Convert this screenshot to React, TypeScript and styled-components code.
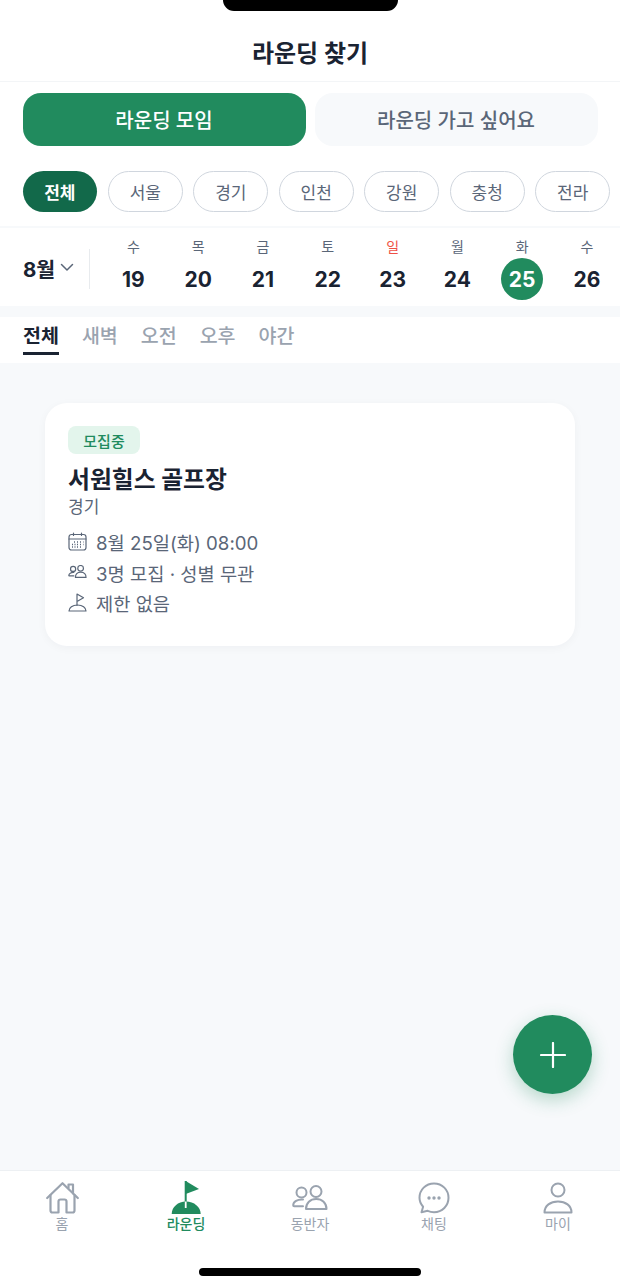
import React from 'react';
import styled, { createGlobalStyle } from 'styled-components';

const GlobalStyle = createGlobalStyle`
  * { box-sizing: border-box; }
  html, body { margin: 0; padding: 0; background: #fff; }
  body { font-family: "Inter", "Noto Sans CJK KR", sans-serif; color: #1a2332; }
`;

const Screen = styled.div`
  position: relative;
  width: 620px;
  height: 1276px;
  display: flex;
  flex-direction: column;
  overflow: hidden;
  background: #f7f9fb;
`;

const Notch = styled.div`
  position: absolute;
  top: 0;
  left: 223px;
  width: 175px;
  height: 11px;
  background: #000;
  border-radius: 0 0 18px 18px;
`;

const Header = styled.header`
  height: 82px;
  padding-top: 37px;
  background: #fff;
  border-bottom: 1px solid #f3f5f7;
  text-align: center;
  font-size: 24px;
  line-height: 34px;
  font-weight: 700;
  color: #1a2332;
`;

const ModeRow = styled.div`
  display: flex;
  gap: 9px;
  padding: 11px 22.5px 0;
  background: #fff;
`;

const ModeButton = styled.div<{ $active?: boolean }>`
  flex: 1;
  height: 53px;
  display: flex;
  align-items: center;
  justify-content: center;
  border-radius: 18px;
  font-size: 20px;
  font-weight: 500;
  background: ${p => (p.$active ? '#218b5e' : '#f7f9fb')};
  color: ${p => (p.$active ? '#fff' : '#5a6678')};
`;

const RegionRow = styled.div`
  display: flex;
  gap: 10.9px;
  padding: 25px 0 14px 22.5px;
  background: #fff;
`;

const RegionChip = styled.div<{ $active?: boolean }>`
  flex: none;
  width: 74.6px;
  height: 41px;
  display: flex;
  align-items: center;
  justify-content: center;
  border-radius: 21px;
  font-size: 17px;
  font-weight: ${p => (p.$active ? 700 : 400)};
  background: ${p => (p.$active ? '#12694a' : '#fff')};
  color: ${p => (p.$active ? '#fff' : '#5a6678')};
  border: ${p => (p.$active ? 'none' : '1.5px solid #d0d6de')};
`;

const CalendarRow = styled.div`
  display: flex;
  align-items: center;
  height: 79px;
  margin-top: 1px;
  padding-top: 3px;
  background: #fff;
  border-top: 1px solid #f7f9fb;
`;

const MonthPicker = styled.div`
  width: 90px;
  height: 40px;
  padding: 0 0 2px 23px;
  display: flex;
  align-items: center;
  gap: 5px;
  border-right: 1px solid #e8ebee;
  font-size: 20.5px;
  font-weight: 700;
`;

const DayList = styled.div`
  flex: 1;
  display: grid;
  grid-template-columns: repeat(8, 64.8px);
  padding-left: 11px;
`;

const DayCell = styled.div`
  display: flex;
  flex-direction: column;
  align-items: center;
`;

const Weekday = styled.span<{ $sunday?: boolean }>`
  font-size: 14px;
  line-height: 20px;
  color: ${p => (p.$sunday ? '#ef5145' : '#5a6678')};
`;

const DateNumber = styled.span<{ $selected?: boolean }>`
  width: 42px;
  height: 42px;
  margin-top: 1.5px;
  display: flex;
  align-items: center;
  justify-content: center;
  border-radius: 50%;
  font-size: 21px;
  font-weight: 700;
  background: ${p => (p.$selected ? '#218b5e' : 'transparent')};
  color: ${p => (p.$selected ? '#fff' : '#1a2332')};
`;

const TabBar = styled.div`
  display: flex;
  gap: 23px;
  height: 46px;
  margin-top: 11px;
  padding: 0 23px;
  background: #fff;
`;

const TimeTab = styled.div<{ $active?: boolean }>`
  height: 38px;
  font-size: 19.5px;
  line-height: 38px;
  font-weight: ${p => (p.$active ? 700 : 500)};
  color: ${p => (p.$active ? '#1a2332' : '#9aa3af')};
  border-bottom: ${p => (p.$active ? '3px solid #1a2332' : 'none')};
`;

const Content = styled.main`
  flex: 1;
  padding: 40px 45px 0;
`;

const RoundCard = styled.article`
  height: 243px;
  padding: 23px;
  background: #fff;
  border-radius: 22px;
  box-shadow: 0 2px 10px rgba(26, 35, 50, 0.04);
`;

const StatusBadge = styled.span`
  display: inline-flex;
  align-items: center;
  justify-content: center;
  width: 72px;
  height: 28px;
  border-radius: 8px;
  font-size: 15px;
  font-weight: 500;
  background: #e3f5ec;
  color: #218b5e;
`;

const CourseName = styled.h2`
  margin: 10px 0 0;
  font-size: 23.8px;
  line-height: 31px;
  font-weight: 700;
  color: #1a2332;
`;

const CourseRegion = styled.div`
  font-size: 17px;
  line-height: 24px;
  color: #5a6678;
`;

const InfoList = styled.div`
  display: flex;
  flex-direction: column;
  gap: 5.5px;
  margin-top: 10px;
`;

const InfoRow = styled.div`
  display: flex;
  align-items: center;
  gap: 9px;
  height: 25px;
  font-size: 18.7px;
  color: #5a6678;
`;

const Fab = styled.button`
  position: absolute;
  left: 513px;
  top: 1015px;
  width: 79px;
  height: 79px;
  padding: 0;
  display: flex;
  align-items: center;
  justify-content: center;
  border: none;
  border-radius: 50%;
  background: #218b5e;
  box-shadow: 0 6px 18px rgba(33, 139, 94, 0.3);
`;

const BottomNav = styled.nav`
  height: 106px;
  display: grid;
  grid-template-columns: repeat(5, 1fr);
  padding: 10px 0 0;
  background: #fff;
  border-top: 1px solid #edf0f3;
`;

const NavItem = styled.div<{ $active?: boolean }>`
  display: flex;
  flex-direction: column;
  align-items: center;
  font-size: 14px;
  line-height: 20px;
  font-weight: ${p => (p.$active ? 500 : 400)};
  color: ${p => (p.$active ? '#218b5e' : '#9aa3af')};
`;

const NavIcon = styled.span`
  height: 33px;
  display: flex;
  align-items: flex-end;
`;

const HomeIndicator = styled.div`
  position: absolute;
  left: 199px;
  top: 1268px;
  width: 222px;
  height: 8px;
  border-radius: 4px;
  background: #000;
`;

const days = [
  { label: '수', date: 19 },
  { label: '목', date: 20 },
  { label: '금', date: 21 },
  { label: '토', date: 22 },
  { label: '일', date: 23, sunday: true },
  { label: '월', date: 24 },
  { label: '화', date: 25, selected: true },
  { label: '수', date: 26 },
];

const regions = ['전체', '서울', '경기', '인천', '강원', '충청', '전라'];
const timeTabs = ['전체', '새벽', '오전', '오후', '야간'];

const line = { fill: 'none', stroke: 'currentColor', strokeLinecap: 'round', strokeLinejoin: 'round' } as const;

const CalendarIcon = () => (
  <svg width="19" height="19" viewBox="0 0 19 19" {...line} strokeWidth="1.2">
    <rect x="1" y="2.500" width="17" height="15.500" rx="2.500" />
    <path d="M1 7h17M5.500 1v2.500M13.500 1v2.500" />
    <path d="M6 10h1M9 10h1M12 10h1M15 10h.5M4 12.500h1M6.500 12.500h1M9 12.500h1M12 12.500h1M15 12.500h.5M4 15h1M6.500 15h1M9 15h1M12 15h1" strokeWidth="1.300" strokeLinecap="butt" />
  </svg>
);

// same two-person shape is used in the info row and in the tab bar
const PeopleIcon = ({ width, height, stroke }: { width: number; height: number; stroke: number }) => (
  <svg width={width} height={height} viewBox="0 0 36 29" {...line} strokeWidth={stroke}>
    <circle cx="9.500" cy="7.500" r="5" />
    <circle cx="24" cy="6.500" r="5.500" />
    <path d="M14 24c0-6 4.200-10 10.200-10s10.300 4 10.300 10z" />
    <path d="M11 14.500C5.500 14 1.200 16.800 1.200 20.300c0 .5.400.9 1 .9H11" />
  </svg>
);

const FlagOutlineIcon = () => (
  <svg width="19" height="19" viewBox="0 0 19 19" {...line} strokeWidth="1.2">
    <path d="M9 12.500V1l6.500 3.800L9 8.500" />
    <path d="M1 18c0-3.500 3.500-6 8.500-6s8.500 2.500 8.500 6z" />
  </svg>
);

const HomeIcon = () => (
  <svg width="33" height="32" viewBox="0 0 33 32" {...line} strokeWidth="2.200">
    <path d="M1.200 16 16.500 1.200 31.800 16" />
    <path d="M22.500 6V2.500H27v9" />
    <path d="M4.500 13v15.500a2 2 0 0 0 2 2h6V19.500a2 2 0 0 1 2-2h4a2 2 0 0 1 2 2v11h6a2 2 0 0 0 2-2V13" />
  </svg>
);

const FlagFilledIcon = () => (
  <svg width="30" height="33" viewBox="0 0 30 33">
    <path d="M14.700 0 28 8l-13.300 5z" fill="#218b5e" />
    <path d="M14.700 0v21" stroke="#218b5e" strokeWidth="2" />
    <path d="M.7 33C.7 26 7 20.500 15 20.500S29.700 26 29.700 33z" fill="#218b5e" />
    <path d="M14.700 20.500v6.500" stroke="#fff" strokeWidth="1.800" />
  </svg>
);

const ChatIcon = () => (
  <svg width="32" height="32" viewBox="0 0 32 32" {...line} strokeWidth="2">
    <path d="M16 1.500c8.200 0 14.500 6.300 14.500 14.300S24.200 30.200 16 30.200c-2.300 0-4.400-.5-6.300-1.400L3.500 30.300l1.600-5.600C2.800 22.200 1.500 19.200 1.500 15.800 1.500 7.800 7.800 1.500 16 1.500z" />
    <circle cx="11" cy="16" r="1.700" fill="currentColor" stroke="none" />
    <circle cx="16" cy="16" r="1.700" fill="currentColor" stroke="none" />
    <circle cx="21" cy="16" r="1.700" fill="currentColor" stroke="none" />
  </svg>
);

const ProfileIcon = () => (
  <svg width="30" height="32" viewBox="0 0 30 32" {...line} strokeWidth="2">
    <circle cx="15" cy="8" r="6.500" />
    <path d="M1.500 30.500c0-7 6-11 13.500-11s13.500 4 13.500 11z" />
  </svg>
);

const navItems = [
  { label: '홈', icon: <HomeIcon /> },
  { label: '라운딩', icon: <FlagFilledIcon />, active: true },
  { label: '동반자', icon: <PeopleIcon width={36} height={29} stroke={2} /> },
  { label: '채팅', icon: <ChatIcon /> },
  { label: '마이', icon: <ProfileIcon /> },
];

export default function App() {
  return (
    <Screen>
      <GlobalStyle />
      <Notch />
      <Header>라운딩 찾기</Header>

      <ModeRow>
        <ModeButton $active>라운딩 모임</ModeButton>
        <ModeButton>라운딩 가고 싶어요</ModeButton>
      </ModeRow>

      <RegionRow>
        {regions.map((region, i) => (
          <RegionChip key={region} $active={i === 0}>{region}</RegionChip>
        ))}
      </RegionRow>

      <CalendarRow>
        <MonthPicker>
          8월
          <svg width="14" height="9" viewBox="0 0 14 9" fill="none" stroke="#5a6678" strokeWidth="1.500" strokeLinecap="round" strokeLinejoin="round">
            <path d="M1.500 1.500 7 7l5.500-5.500" />
          </svg>
        </MonthPicker>
        <DayList>
          {days.map(day => (
            <DayCell key={day.date}>
              <Weekday $sunday={day.sunday}>{day.label}</Weekday>
              <DateNumber $selected={day.selected}>{day.date}</DateNumber>
            </DayCell>
          ))}
        </DayList>
      </CalendarRow>

      <TabBar>
        {timeTabs.map((tab, i) => (
          <TimeTab key={tab} $active={i === 0}>{tab}</TimeTab>
        ))}
      </TabBar>

      <Content>
        <RoundCard>
          <StatusBadge>모집중</StatusBadge>
          <CourseName>서원힐스 골프장</CourseName>
          <CourseRegion>경기</CourseRegion>
          <InfoList>
            <InfoRow><CalendarIcon />8월 25일(화) 08:00</InfoRow>
            <InfoRow><PeopleIcon width={19} height={15} stroke={2.300} />3명 모집 · 성별 무관</InfoRow>
            <InfoRow><FlagOutlineIcon />제한 없음</InfoRow>
          </InfoList>
        </RoundCard>
      </Content>

      <Fab aria-label="라운딩 만들기">
        <svg width="26" height="26" viewBox="0 0 26 26" stroke="#fff" strokeWidth="2.200" strokeLinecap="round">
          <path d="M13 1v24M1 13h24" />
        </svg>
      </Fab>

      <BottomNav>
        {navItems.map(item => (
          <NavItem key={item.label} $active={item.active}>
            <NavIcon>{item.icon}</NavIcon>
            {item.label}
          </NavItem>
        ))}
      </BottomNav>

      <HomeIndicator />
    </Screen>
  );
}
